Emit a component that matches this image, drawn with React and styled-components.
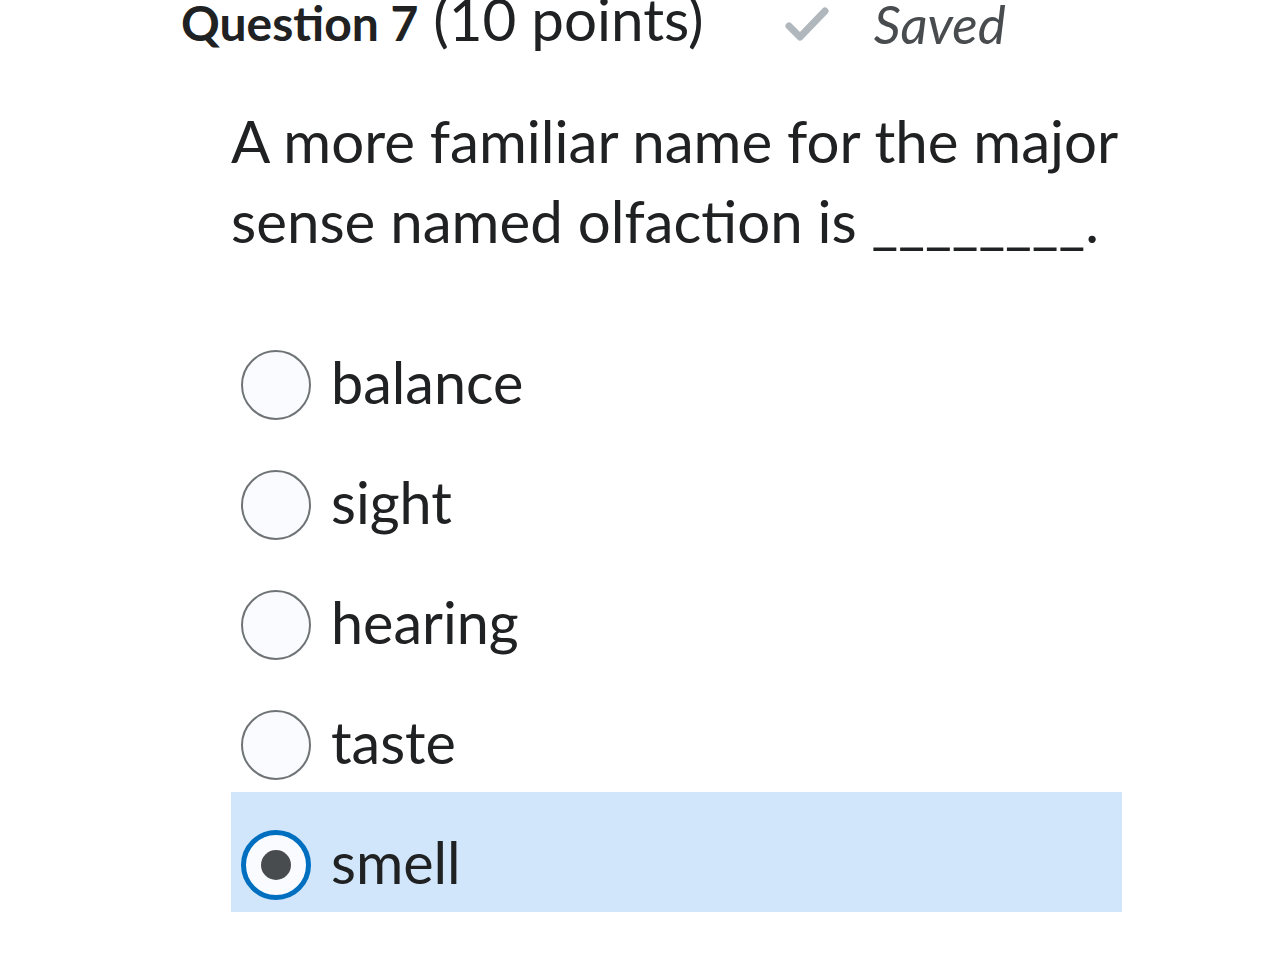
import React, { useState } from "react";
import styled, { createGlobalStyle } from "styled-components";

const GlobalStyle = createGlobalStyle`
  html, body {
    margin: 0;
    padding: 0;
    background: #ffffff;
    font-family: Lato, "Open Sans", sans-serif;
    color: #202122;
    overflow: hidden;
  }
`;

const Page = styled.div`
  width: 1284px;
  height: 956px;
  box-sizing: border-box;
  padding-left: 181px;
`;

const Header = styled.div`
  display: flex;
  align-items: flex-start;
  margin-top: -11px;
  height: 58px;
`;

const Title = styled.h2`
  margin: 0;
  font-size: 58.3px;
  line-height: 58px;
  font-weight: 400;
  color: #202122;
  white-space: nowrap;

  b {
    font-size: 48px;
    font-weight: 700;
  }
`;

const SavedBox = styled.div`
  display: flex;
  align-items: center;
  margin-left: 81px;
  margin-top: 6px;
  gap: 45px;
  color: #494c4e;
  font-style: italic;
  font-size: 53px;
  line-height: 58px;
`;

const Body = styled.div`
  padding-left: 50px;
  margin-top: 54px;
`;

const Prompt = styled.p`
  margin: 0;
  font-size: 58.2px;
  line-height: 80px;
  color: #202122;
  width: 920px;
`;

const Options = styled.div`
  margin-top: 51px;
  width: 891px;
  display: flex;
  flex-direction: column;
`;

const Option = styled.label`
  display: flex;
  align-items: flex-start;
  box-sizing: border-box;
  height: 120px;
  padding: 38px 0 0 10px;
  gap: 20px;
  cursor: pointer;
  background: ${(p) => (p.$selected ? "#d1e6fa" : "transparent")};
`;

const Radio = styled.span`
  width: 70px;
  height: 70px;
  box-sizing: border-box;
  border-radius: 50%;
  flex: none;
  background: #f9fbff;
  border: ${(p) => (p.$selected ? "5px solid #006fbf" : "2.5px solid #6e7376")};
  display: flex;
  align-items: center;
  justify-content: center;

  &::after {
    content: "";
    display: ${(p) => (p.$selected ? "block" : "none")};
    width: 30px;
    height: 30px;
    border-radius: 50%;
    background: #494c4e;
  }
`;

const OptionText = styled.span`
  font-size: 57.5px;
  line-height: 70px;
  color: #202122;
  position: relative;
  top: -3px;
`;

const choices = ["balance", "sight", "hearing", "taste", "smell"];

export default function App() {
  const [picked, setPicked] = useState("smell");

  return (
    <>
      <GlobalStyle />
      <Page>
        <Header>
          <Title>
            <b>Question 7</b> (10 points)
          </Title>
          <SavedBox>
            <svg width="44" height="36" viewBox="0 0 44 36">
              <path
                d="M4 20 L15 31 L40 5"
                fill="none"
                stroke="#b0b8bd"
                strokeWidth="7"
                strokeLinecap="round"
                strokeLinejoin="round"
              />
            </svg>
            <span>Saved</span>
          </SavedBox>
        </Header>
        <Body>
          <Prompt>
            A more familiar name for the major sense named olfaction is
            ________.
          </Prompt>
          <Options>
            {choices.map((c) => (
              <Option
                key={c}
                $selected={picked === c}
                onClick={() => setPicked(c)}
              >
                <Radio $selected={picked === c} />
                <OptionText>{c}</OptionText>
              </Option>
            ))}
          </Options>
        </Body>
      </Page>
    </>
  );
}
